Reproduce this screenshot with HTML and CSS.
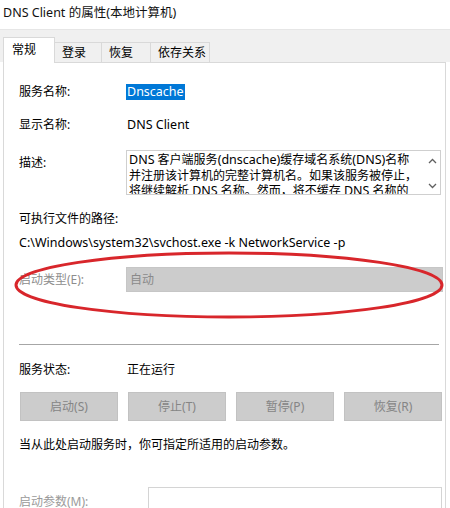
FILE: index.html
```html
<!DOCTYPE html>
<html lang="zh-CN">
<head>
<meta charset="utf-8">
<title>DNS Client 的属性(本地计算机)</title>
<link rel="stylesheet" href="styles.css">
</head>
<body>
<div class="dialog">
  <div class="title"><span class="en">DNS Client</span> 的属性(本地计算机)</div>
  <div class="tabstrip">
    <div class="tab active">常规</div>
    <div class="tab t-logon">登录</div>
    <div class="tab t-recover">恢复</div>
    <div class="tab t-deps">依存关系</div>
  </div>
  <div class="panel">
    <div class="row r-name">
      <span class="label">服务名称:</span>
      <span class="value en"><span class="selected">Dnscache</span></span>
    </div>
    <div class="row r-display">
      <span class="label">显示名称:</span>
      <span class="value en">DNS Client</span>
    </div>
    <div class="row r-desc">
      <span class="label desc-label">描述:</span>
      <div class="textbox">
        <div class="textbox-text"><div class="tline"><span class="en">DNS</span> 客户端服务<span class="en">(dnscache)</span>缓存域名系统<span class="en">(DNS)</span>名称</div><div class="tline">并注册该计算机的完整计算机名。如果该服务被停止，</div><div class="tline">将继续解析 <span class="en">DNS</span> 名称。然而，将不缓存 <span class="en">DNS</span> 名称的</div><div class="tline">查询结果，且不注册该计算机名。</div></div>
        <div class="scrollbar">
          <svg class="arrow" width="9" height="6" viewBox="0 0 9 6"><path d="M1 5 L4.5 1.5 L8 5" fill="none" stroke="#606060" stroke-width="1.3"/></svg>
          <svg class="arrow" width="9" height="6" viewBox="0 0 9 6"><path d="M1 1 L4.5 4.5 L8 1" fill="none" stroke="#606060" stroke-width="1.3"/></svg>
        </div>
      </div>
    </div>
    <div class="row r-pathlabel">可执行文件的路径:</div>
    <div class="row r-path en">C:\Windows\system32\svchost.exe -k NetworkService -p</div>
    <div class="row r-startup">
      <span class="label disabled">启动类型(E):</span>
      <div class="combo">自动</div>
    </div>
    <div class="separator"></div>
    <div class="row r-status">
      <span class="label">服务状态:</span>
      <span class="value">正在运行</span>
    </div>
    <div class="buttons">
      <div class="btn">启动(S)</div>
      <div class="btn">停止(T)</div>
      <div class="btn">暂停(P)</div>
      <div class="btn">恢复(R)</div>
    </div>
    <div class="row r-help">当从此处启动服务时，你可指定所适用的启动参数。</div>
    <div class="row r-params">
      <span class="label disabled params-label">启动参数(M):</span>
      <div class="input"></div>
    </div>
  </div>
  <svg class="annotation" width="434" height="70" viewBox="0 0 434 70">
    <ellipse cx="216" cy="35" rx="213" ry="32" fill="none" stroke="#d8262b" stroke-width="3"/>
  </svg>
</div>
</body>
</html>
```

FILE: styles.css
```css
html, body {
  margin: 0;
  padding: 0;
  background: #ffffff;
}
body {
  width: 450px;
  height: 508px;
  overflow: hidden;
  font-family: "Noto Sans", "Noto Sans CJK SC", sans-serif;
  font-size: 12px;
  color: #000;
}
.en { font-size: 12.5px; }
.dialog {
  position: relative;
  width: 450px;
  height: 508px;
}
.title {
  height: 29px;
  line-height: 26px;
  padding-left: 3px;
  font-size: 12.5px;
  color: #111;
  white-space: nowrap;
}
.tabstrip {
  height: 32px;
  background: #f0f0f0;
  border-top: 1px solid #e6e6e6;
  display: flex;
  align-items: flex-end;
  padding-left: 3px;
}
.tab {
  box-sizing: border-box;
  height: 20px;
  line-height: 19px;
  padding-left: 7px;
  border: 1px solid #d9d9d9;
  border-bottom: none;
  margin-left: -1px;
  background: #f0f0f0;
  white-space: nowrap;
}
.tab.active {
  margin-left: 0;
  width: 52px;
  height: 26px;
  line-height: 24px;
  padding-left: 8px;
  background: #fff;
  position: relative;
  z-index: 1;
  margin-bottom: -1px;
}
.t-logon { width: 48px; }
.t-recover { width: 50px; }
.t-deps { width: 60px; }
.panel {
  margin-left: 3px;
  width: 443px;
  height: 447px;
  border-top: 1px solid #d9d9d9;
  border-left: 1px solid #d9d9d9;
  border-right: 1px solid #d9d9d9;
  background: #fff;
  padding-top: 21px;
  box-sizing: border-box;
}
.row {
  display: flex;
  height: 16px;
  line-height: 16px;
  padding-left: 15px;
  white-space: nowrap;
}
.label {
  width: 108px;
  flex: none;
}
.value { flex: none; }
.selected {
  display: inline-block;
  background: #0078d7;
  color: #fff;
  padding: 0 1px;
  margin-left: -1px;
}
.r-display { margin-top: 17px; }
.r-desc {
  margin-top: 17px;
  height: 45px;
}
.desc-label { padding-top: 5px; }
.textbox {
  width: 315px;
  height: 45px;
  box-sizing: border-box;
  border: 1px solid #cfcfcf;
  display: flex;
  overflow: hidden;
  margin-left: -1px;
}
.textbox-text {
  flex: 1;
  min-width: 0;
  padding: 1px 0 0 2px;
  height: 43px;
  box-sizing: border-box;
  overflow: hidden;
}
.tline {
  height: 15.5px;
  line-height: 15.5px;
  white-space: nowrap;
}
.scrollbar {
  width: 16px;
  flex: none;
  display: flex;
  flex-direction: column;
  justify-content: space-between;
  align-items: center;
  padding: 7px 0 5px;
  box-sizing: border-box;
}
.arrow { display: block; }
.r-pathlabel { margin-top: 16px; }
.r-path { margin-top: 8px; }
.r-startup {
  margin-top: 16px;
  height: 25px;
  line-height: 25px;
}
.disabled { color: #8d8d8d; }
.combo {
  width: 317px;
  height: 25px;
  box-sizing: border-box;
  background: #cccccc;
  border: 1px solid #c6c6c6;
  color: #8a8a8a;
  padding-left: 3px;
  line-height: 23px;
  margin-left: -1px;
}
.separator {
  margin: 52px 6px 0 15px;
  height: 1px;
  background: #a6a6a6;
}
.r-status { margin-top: 17px; }
.buttons {
  margin-top: 14px;
  padding-left: 16px;
  display: grid;
  grid-template-columns: repeat(4, 98px);
  column-gap: 10px;
}
.btn {
  height: 29px;
  box-sizing: border-box;
  background: #cccccc;
  border: 1px solid #c2c2c2;
  color: #858585;
  text-align: center;
  line-height: 27px;
}
.r-help { margin-top: 16px; }
.r-params {
  margin-top: 34px;
  height: 30px;
}
.params-label {
  width: 129px;
  padding-top: 7px;
  color: #9a9a9a;
}
.input {
  width: 294px;
  height: 30px;
  box-sizing: border-box;
  border: 1px solid #d4d4d4;
  border-bottom: none;
}
.annotation {
  position: absolute;
  left: 13px;
  top: 250px;
}
```
